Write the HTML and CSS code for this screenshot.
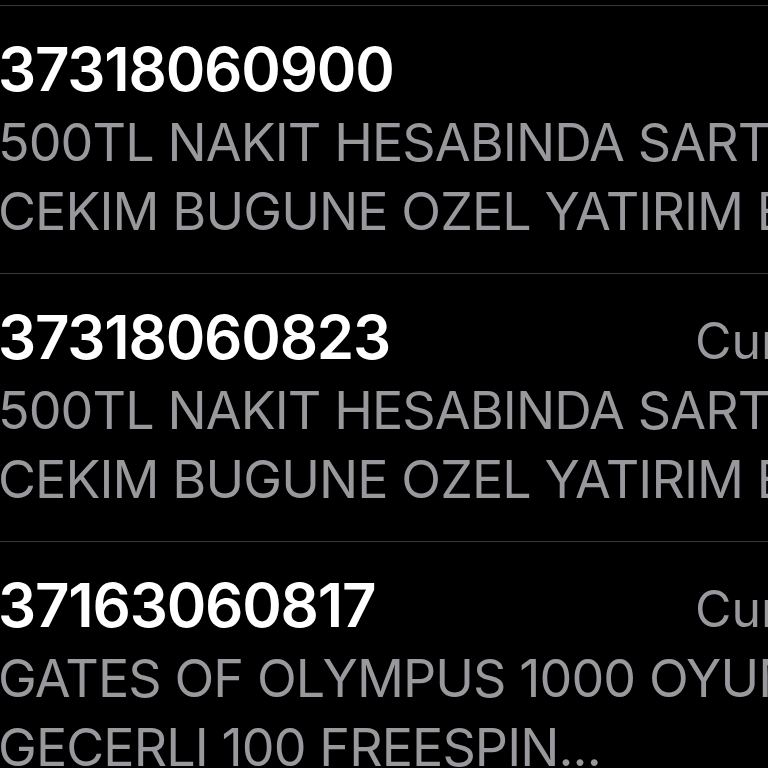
FILE: index.html
```html
<!DOCTYPE html>
<html lang="tr">
<head>
<meta charset="utf-8">
<title>Mesajlar</title>
<link rel="stylesheet" href="styles.css">
</head>
<body>
<ul class="list">
  <li class="row">
    <div class="head">
      <span class="sender">37318060900</span>
      <span class="date"></span>
    </div>
    <div class="preview">
      <span class="line">500TL NAKIT HESABINDA SART</span>
      <span class="line">CEKIM BUGUNE OZEL YATIRIM EKSTRA BONUS</span>
    </div>
  </li>
  <li class="row">
    <div class="head">
      <span class="sender">37318060823</span>
      <span class="date">Cuma</span>
    </div>
    <div class="preview">
      <span class="line">500TL NAKIT HESABINDA SART</span>
      <span class="line">CEKIM BUGUNE OZEL YATIRIM EKSTRA BONUS</span>
    </div>
  </li>
  <li class="row">
    <div class="head">
      <span class="sender">37163060817</span>
      <span class="date">Cuma</span>
    </div>
    <div class="preview">
      <span class="line">GATES OF OLYMPUS 1000 OYUNUNDA</span>
      <span class="line">GECERLI 100 FREESPIN...</span>
    </div>
  </li>
</ul>
</body>
</html>
```
FILE: styles.css
```css
html, body {
  margin: 0;
  padding: 0;
  background: #000;
  overflow: hidden;
  height: 768px;
}
body {
  font-family: Inter, "Noto Sans", sans-serif;
  color: #fff;
}
.list {
  list-style: none;
  margin: 0 0 0 -2px;
  padding: 5px 0 0 0;
  width: 902px;
}
.row {
  border-top: 1px solid #3a3a3c;
  padding: 27px 0 27px 0;
}
.head {
  display: flex;
  align-items: baseline;
  height: 72px;
}
.sender {
  font-size: 60px;
  line-height: 72px;
  font-weight: 600;
  letter-spacing: -1.2px;
  white-space: nowrap;
}
.date {
  margin-left: auto;
  font-size: 50px;
  line-height: 72px;
  color: #98989d;
  white-space: nowrap;
  width: 205px;
}
.preview {
  margin-top: 3px;
  display: flex;
  flex-direction: column;
}
.line {
  font-size: 52px;
  line-height: 69px;
  letter-spacing: -0.9px;
  color: #98989d;
  white-space: nowrap;
  overflow: hidden;
}
```
